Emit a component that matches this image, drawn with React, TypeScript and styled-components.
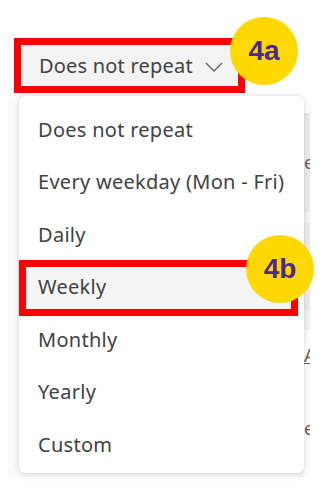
import styled, { createGlobalStyle } from "styled-components";

const OPTIONS = [
  "Does not repeat",
  "Every weekday (Mon - Fri)",
  "Daily",
  "Weekly",
  "Monthly",
  "Yearly",
  "Custom",
];

const MARKED = "Weekly";

// bits of the app behind the menu that peek out at the right edge
const SIDE_BANDS = [
  { h: 20, bg: "#ffffff", glyph: "" },
  { h: 99, bg: "#ececec", glyph: "e" },
  { h: 10, bg: "#f6f6f6", glyph: "" },
  { h: 88, bg: "#ececec", glyph: "" },
  { h: 20, bg: "#f4f4f4", glyph: "" },
  { h: 50, bg: "#ffffff", glyph: "A", underline: true },
  { h: 97, bg: "#ffffff", glyph: "e" },
];

const GlobalStyle = createGlobalStyle`
  body {
    margin: 0;
    background: #ffffff;
    font-family: "Noto Sans", "Open Sans", sans-serif;
  }
`;

export default function App() {
  return (
    <>
      <GlobalStyle />
      <Page>
        <ButtonRow>
          <Mark>
            <SelectButton>
              <span>Does not repeat</span>
              <Chevron width="18" height="10" viewBox="0 0 18 10">
                <polyline
                  points="1,1 9,9 17,1"
                  fill="none"
                  stroke="#616161"
                  strokeWidth="1.3"
                />
              </Chevron>
            </SelectButton>
            <Badge $left={209} $top={-28}>
              4a
            </Badge>
          </Mark>
        </ButtonRow>
        <Backdrop>
          <Menu>
            {OPTIONS.map((o) => (
              <Item key={o}>
                {o === MARKED && <ItemMark />}
                {o}
                {o === MARKED && (
                  <Badge $left={227} $top={-26}>
                    4b
                  </Badge>
                )}
              </Item>
            ))}
          </Menu>
          <SideStrip>
            {SIDE_BANDS.map((b, i) => (
              <Band key={i} $h={b.h} $bg={b.bg} $underline={!!b.underline}>
                {b.glyph}
              </Band>
            ))}
          </SideStrip>
        </Backdrop>
      </Page>
    </>
  );
}

const Page = styled.div`
  width: 328px;
  height: 500px;
  overflow: hidden;
`;

const ButtonRow = styled.div`
  padding: 38px 0 0 14px;
  display: flex;
`;

const Mark = styled.div`
  position: relative;
  border: 7px solid #ff0000;
`;

const SelectButton = styled.div`
  width: 217px;
  height: 41px;
  box-sizing: border-box;
  padding: 0 15px 0 18px;
  display: flex;
  align-items: center;
  background: #f3f3f3;
  color: #424242;
  font-size: 20px;
  letter-spacing: 0.2px;
`;

const Chevron = styled.svg`
  margin-left: auto;
  margin-top: 3px;
`;

const Badge = styled.div<{ $left: number; $top: number }>`
  position: absolute;
  left: ${(p) => p.$left}px;
  top: ${(p) => p.$top}px;
  z-index: 2;
  width: 68px;
  height: 68px;
  border-radius: 50%;
  background: #ffd800;
  color: #4b2a8c;
  font-family: "Liberation Sans", Arial, sans-serif;
  font-weight: 700;
  font-size: 28px;
  letter-spacing: 0;
  display: flex;
  align-items: center;
  justify-content: center;
`;

const Backdrop = styled.div`
  margin-left: 8px;
  width: 302px;
  height: 384px;
  box-sizing: border-box;
  padding: 3px 0 0 11px;
  display: flex;
  background: #fbfbfb;
`;

const Menu = styled.div`
  width: 285px;
  height: 377px;
  box-sizing: border-box;
  padding: 7px 0 2.5px;
  background: #ffffff;
  border-radius: 6px;
  box-shadow: 0 0 2px rgba(0, 0, 0, 0.12), 0 2px 8px rgba(0, 0, 0, 0.12);
  position: relative;
  z-index: 1;
`;

const Item = styled.div`
  position: relative;
  z-index: 0;
  height: 52.5px;
  padding-left: 19px;
  display: flex;
  align-items: center;
  color: #424242;
  font-size: 20px;
  letter-spacing: 0.28px;
`;

const ItemMark = styled.div`
  position: absolute;
  left: 0;
  top: -1px;
  right: 6px;
  bottom: -3px;
  z-index: -1;
  border: 7px solid #ff0000;
  background: #f5f5f5;
`;

const SideStrip = styled.div`
  width: 6px;
  margin-top: -3px;
  overflow: hidden;
  display: flex;
  flex-direction: column;
`;

const Band = styled.div<{ $h: number; $bg: string; $underline: boolean }>`
  height: ${(p) => p.$h}px;
  flex: none;
  background: ${(p) => p.$bg};
  color: #616161;
  font-size: 18px;
  line-height: ${(p) => p.$h}px;
  text-decoration: ${(p) => (p.$underline ? "underline" : "none")};
  white-space: nowrap;
`;
